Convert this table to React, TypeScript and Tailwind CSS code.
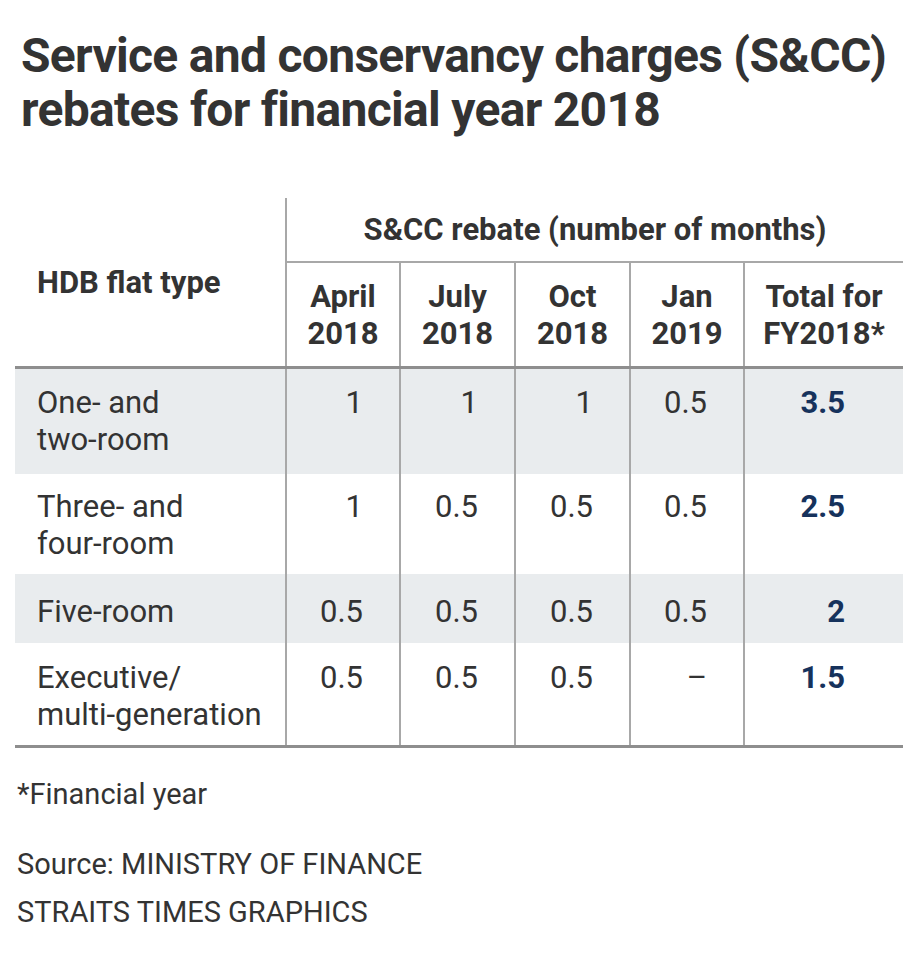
import React from 'react';

interface Row {
  label: string[];
  values: string[];
  total: string;
  shaded: boolean;
  height: string;
  pad: string;
}

const rows: Row[] = [
  { label: ['One- and', 'two-room'], values: ['1', '1', '1', '0.5'], total: '3.5', shaded: true, height: 'h-[105px]', pad: 'pt-[15px]' },
  { label: ['Three- and', 'four-room'], values: ['1', '0.5', '0.5', '0.5'], total: '2.5', shaded: false, height: 'h-[100px]', pad: 'pt-[14px]' },
  { label: ['Five-room'], values: ['0.5', '0.5', '0.5', '0.5'], total: '2', shaded: true, height: 'h-[69px]', pad: 'pt-[19px]' },
  { label: ['Executive/', 'multi-generation'], values: ['0.5', '0.5', '0.5', '–'], total: '1.5', shaded: false, height: 'h-[102px]', pad: 'pt-[16px]' },
];

const months = [
  ['April', '2018'],
  ['July', '2018'],
  ['Oct', '2018'],
  ['Jan', '2019'],
  ['Total for', 'FY2018*'],
];

const cols = 'grid grid-cols-[270px_114px_115px_115px_114px_160px]';

const App: React.FC = () => {
  return (
    <div className="w-[920px] h-[956px] bg-white text-[#333333] font-['Roboto','Liberation_Sans',sans-serif]">
      {/* Title */}
      <h1 className="pl-[21px] pt-[29px] text-[48px] leading-[54px] font-bold tracking-[-0.7px]">
        Service and conservancy charges (S&amp;CC)
        <br />
        rebates for financial year 2018
      </h1>

      {/* Table */}
      <div className="mx-[15px] mt-[61px] w-[888px] text-[31px] leading-[37px]">
        {/* Header */}
        <div className={`${cols} border-b-[3px] border-[#8e8e8e]`}>
          <div className="row-span-2 flex items-center pl-[22px] font-bold">HDB flat type</div>
          <div className="col-span-5 h-[65px] flex items-center justify-center border-l-2 border-b-2 border-[#a8a8a8] font-bold">
            S&amp;CC rebate (number of months)
          </div>
          {months.map((m, i) => (
            <div
              key={i}
              className="h-[103px] flex flex-col items-center justify-center text-center font-bold border-l-2 border-[#a8a8a8]"
            >
              <span>{m[0]}</span>
              <span>{m[1]}</span>
            </div>
          ))}
        </div>

        {/* Body */}
        {rows.map((r, i) => (
          <div key={i} className={`${cols} ${r.height} ${r.shaded ? 'bg-[#e9ecee]' : 'bg-white'}`}>
            <div className={`${r.pad} pl-[22px]`}>
              {r.label.map((l, j) => (
                <div key={j}>{l}</div>
              ))}
            </div>
            {r.values.map((v, j) => (
              <div key={j} className={`${r.pad} pr-[36px] text-right border-l-2 border-[#a8a8a8]`}>
                {v}
              </div>
            ))}
            <div className={`${r.pad} pr-[58px] text-right border-l-2 border-[#a8a8a8] font-bold text-[#16325c]`}>
              {r.total}
            </div>
          </div>
        ))}
        <div className="h-[3px] bg-[#8e8e8e]" />
      </div>

      {/* Notes */}
      <div className="pl-[17px] mt-[22px] text-[29px] leading-[48px]">
        <p>*Financial year</p>
        <p className="mt-[22px]">Source: MINISTRY OF FINANCE</p>
        <p>STRAITS TIMES GRAPHICS</p>
      </div>
    </div>
  );
};

export default App;
